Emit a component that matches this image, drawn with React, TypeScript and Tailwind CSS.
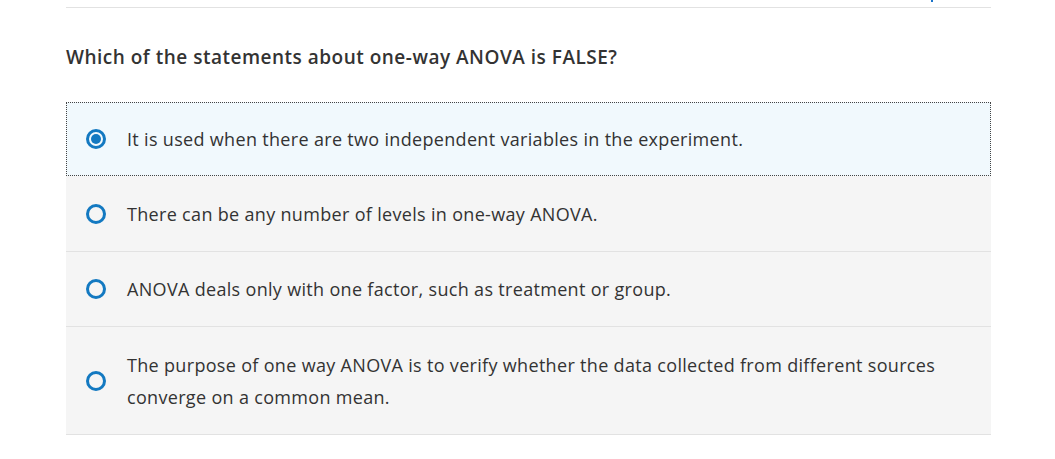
import React, { useState } from "react";

const options = [
  "It is used when there are two independent variables in the experiment.",
  "There can be any number of levels in one-way ANOVA.",
  "ANOVA deals only with one factor, such as treatment or group.",
  "The purpose of one way ANOVA is to verify whether the data collected from different sources converge on a common mean.",
];

function Radio({ checked }: { checked: boolean }) {
  return (
    <span className="flex h-[20px] w-[20px] shrink-0 items-center justify-center rounded-full border-[3px] border-[#1379c1]">
      {checked && <span className="h-[10px] w-[10px] rounded-full bg-[#1379c1]" />}
    </span>
  );
}

export default function App() {
  const [selected, setSelected] = useState(0);

  return (
    <div className="min-h-[459px] bg-white font-['Open_Sans',sans-serif] text-[#333]">
      <div className="mx-[66px] w-[925px]">
        <div className="relative h-[8px] border-b border-[#e2e2e2]">
          <span className="absolute left-[865px] top-0 h-[2px] w-[2px] bg-[#1a73c9]" />
        </div>
        <h2 className="mt-[35px] text-[19px] font-semibold leading-[28px] tracking-[0.5px] text-[#333]">
          Which of the statements about one-way ANOVA is FALSE?
        </h2>
        <div className="mt-[31px]">
          {options.map((text, i) => {
            const active = i === selected;
            return (
              <div
                key={i}
                onClick={() => setSelected(i)}
                className={
                  active
                    ? "flex cursor-pointer items-center border border-dotted border-[#444] bg-[#f1f9fd] py-[20px] pl-[19px] pr-[40px]"
                    : "flex cursor-pointer items-center border-b border-[#e2e2e2] bg-[#f5f5f5] pb-[21px] pl-[20px] pr-[40px] pt-[21.5px]"
                }
              >
                <Radio checked={active} />
                <span className="ml-[21px] text-[18px] leading-[32px] tracking-[0.32px]">{text}</span>
              </div>
            );
          })}
        </div>
      </div>
    </div>
  );
}
